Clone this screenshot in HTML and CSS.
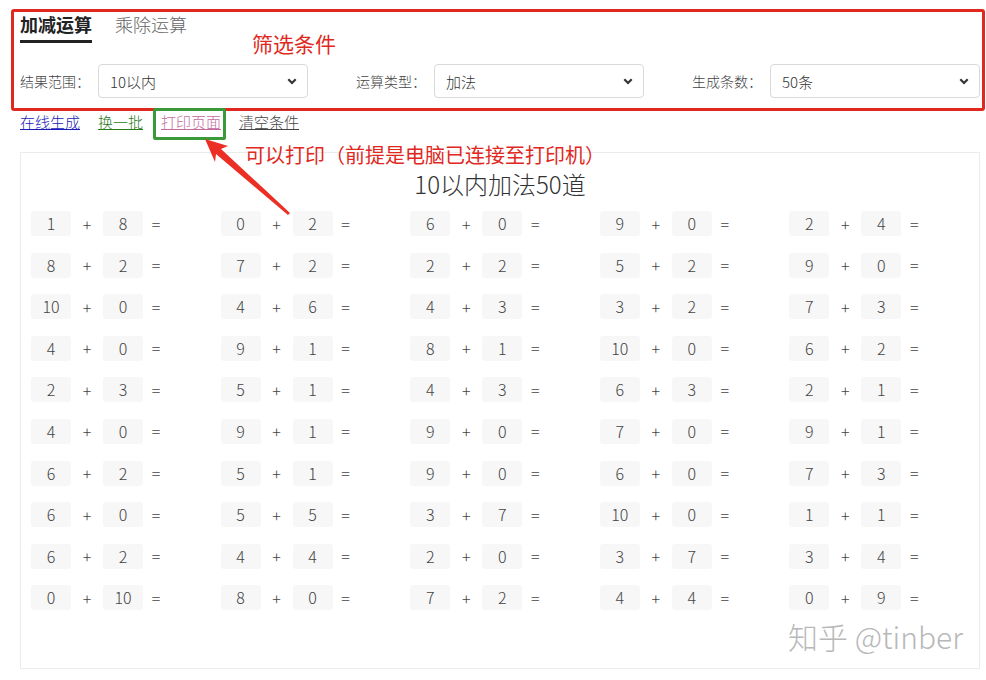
FILE: index.html
```html
<!DOCTYPE html>
<html lang="zh-CN">
<head>
    <meta charset="UTF-8">
    <meta name="viewport" content="width=device-width, initial-scale=1.0">
    <title>口算题生成</title>
    <link rel="stylesheet" href="styles.css">
</head>
<body>
    <div id="page">
        <div class="tabs">
            <span class="tab active">加减运算</span>
            <span class="tab">乘除运算</span>
        </div>
        <div class="filters">
            <label class="filterItem">
                <span class="filterLabel">结果范围：</span>
                <select class="formSelect">
                    <option>10以内</option>
                    <option>20以内</option>
                    <option>100以内</option>
                </select>
            </label>
            <label class="filterItem">
                <span class="filterLabel">运算类型：</span>
                <select class="formSelect">
                    <option>加法</option>
                    <option>减法</option>
                    <option>加减混合</option>
                </select>
            </label>
            <label class="filterItem">
                <span class="filterLabel">生成条数：</span>
                <select class="formSelect">
                    <option>50条</option>
                    <option>100条</option>
                </select>
            </label>
        </div>
        <div class="actions">
            <a href="#" class="link linkBlue">在线生成</a>
            <a href="#" class="link linkGreen">换一批</a>
            <a href="#" class="link linkPink">打印页面</a>
            <a href="#" class="link linkGray">清空条件</a>
        </div>
        <div id="sheet">
            <h1 class="sheetTitle">10以内加法50道</h1>
            <div class="problems" id="problems"></div>
            <div class="watermark">知乎 @tinber</div>
        </div>

        <!-- annotations drawn on top of the screenshot -->
        <div class="markRed"></div>
        <div class="markGreen"></div>
        <div class="noteFilter">筛选条件</div>
        <div class="notePrint">可以打印（前提是电脑已连接至打印机）</div>
        <svg class="arrow" width="986" height="680" viewBox="0 0 986 680">
            <polygon points="205,139 228,146 221,149 290,213 288,215 216,154 215,162" fill="#ec2f24"/>
        </svg>
    </div>
    <script type="text/javascript">
        // the 50 problems, row by row
        const list = [
            [1,8],[0,2],[6,0],[9,0],[2,4],
            [8,2],[7,2],[2,2],[5,2],[9,0],
            [10,0],[4,6],[4,3],[3,2],[7,3],
            [4,0],[9,1],[8,1],[10,0],[6,2],
            [2,3],[5,1],[4,3],[6,3],[2,1],
            [4,0],[9,1],[9,0],[7,0],[9,1],
            [6,2],[5,1],[9,0],[6,0],[7,3],
            [6,0],[5,5],[3,7],[10,0],[1,1],
            [6,2],[4,4],[2,0],[3,7],[3,4],
            [0,10],[8,0],[7,2],[4,4],[0,9]
        ];
        let html = '';
        list.forEach(function (p) {
            html += '<div class="problem">'
                + '<span class="num">' + p[0] + '</span>'
                + '<span class="op">+</span>'
                + '<span class="num">' + p[1] + '</span>'
                + '<span class="eq">=</span>'
                + '</div>';
        });
        document.getElementById('problems').innerHTML = html;
    </script>
</body>
</html>
```

FILE: styles.css
```css
:root {
    --text-color: #333;
    --mark-red: #e0281e;
    --mark-green: #3a9a3a;
    --box-color: #f7f7f7;
}
body {
    margin: 0;
    background: #fff;
    color: var(--text-color);
    font-family: "Noto Sans CJK SC", "Open Sans", sans-serif;
    font-weight: 300;
}
#page {
    position: relative;
    width: 960px;
    height: 680px;
    padding: 0 6px 0 20px;
}
.tabs {
    display: flex;
    gap: 23px;
    padding-top: 12px;
}
.tab {
    font-size: 18px;
    line-height: 24px;
    color: #666;
    padding-bottom: 4px;
    border-bottom: 3px solid transparent;
}
.tab.active {
    color: #222;
    font-weight: bold;
    border-bottom-color: #222;
}
.filters {
    display: flex;
    gap: 48px;
    margin-top: 21px;
}
.filterItem {
    flex: 1;
    display: flex;
    align-items: center;
}
.filterLabel {
    width: 78px;
    flex-shrink: 0;
    font-size: 14px;
    color: #444;
}
.formSelect {
    flex: 1;
    height: 34px;
    padding: 0 30px 0 11px;
    font-family: inherit;
    font-weight: 300;
    font-size: 15px;
    color: #333;
    background: #fff url("data:image/svg+xml;utf8,<svg xmlns='http://www.w3.org/2000/svg' width='10' height='7' viewBox='0 0 10 7'><path d='M1.3 1.3 L5 5 L8.7 1.3' fill='none' stroke='%23333' stroke-width='2.2'/></svg>") no-repeat right 10px center;
    border: 1px solid #d9d9d9;
    border-radius: 4px;
    appearance: none;
    -webkit-appearance: none;
}
.actions {
    display: flex;
    gap: 18px;
    margin-top: 14px;
    font-size: 15px;
    line-height: 20px;
}
.link {
    text-decoration: underline;
}
.linkBlue { color: #1a1ab8; }
.linkGreen { color: #2a7a1c; }
.linkPink { color: #c46aa0; }
.linkGray { color: #444; }
#sheet {
    position: relative;
    margin-top: 20px;
    height: 500px;
    padding-top: 15px;
    border: 1px solid #ebebeb;
}
.sheetTitle {
    margin: 0;
    text-align: center;
    font-size: 24px;
    font-weight: 300;
    line-height: 32px;
    color: #333;
}
.problems {
    display: grid;
    grid-template-columns: repeat(5, 189.6px);
    row-gap: 16.6px;
    margin-top: 11px;
    padding-left: 10px;
}
.problem {
    display: flex;
    align-items: center;
    height: 25px;
    font-size: 16px;
    color: #444;
}
.num {
    width: 40px;
    line-height: 25px;
    text-align: center;
    background: var(--box-color);
    border-radius: 3px;
}
.op {
    width: 32px;
    text-align: center;
}
.eq {
    width: 26px;
    text-align: center;
}
.watermark {
    position: absolute;
    right: 16px;
    bottom: 10px;
    font-size: 30px;
    color: #b8b8b8;
    text-shadow: 0 0 2px #fff, 0 0 2px #fff;
}
.markRed {
    position: absolute;
    left: 11px;
    top: 9px;
    width: 968px;
    height: 96px;
    border: 3px solid var(--mark-red);
    border-radius: 3px;
}
.markGreen {
    position: absolute;
    left: 153px;
    top: 108px;
    width: 67px;
    height: 26px;
    border: 3px solid var(--mark-green);
    border-radius: 2px;
}
.noteFilter {
    position: absolute;
    left: 252px;
    top: 28px;
    font-size: 21px;
    font-weight: 400;
    color: var(--mark-red);
}
.notePrint {
    position: absolute;
    left: 245px;
    top: 140px;
    font-size: 20px;
    font-weight: 400;
    color: var(--mark-red);
}
.arrow {
    position: absolute;
    left: 0;
    top: 0;
    pointer-events: none;
}
```
